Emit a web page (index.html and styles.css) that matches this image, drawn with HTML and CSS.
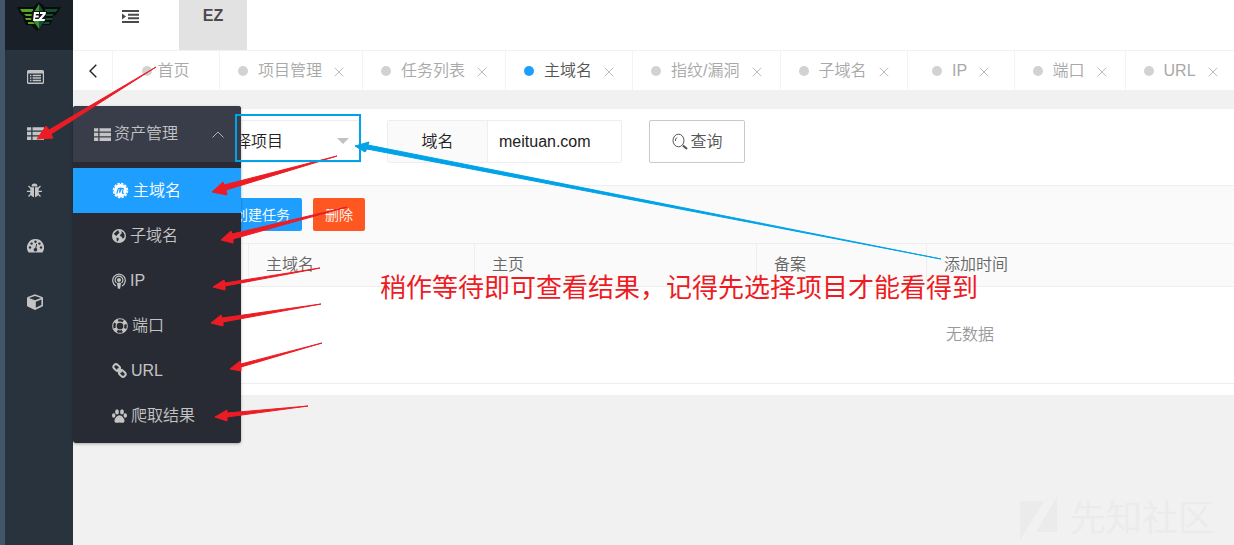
FILE: index.html
```html
<!DOCTYPE html>
<html lang="zh-CN">
<head>
<meta charset="utf-8">
<title>EZ</title>
<link rel="stylesheet" href="styles.css">
</head>
<body>
<svg class="defs" aria-hidden="true">
  <symbol id="list" viewBox="0 0 16 14"><path d="M0 1h4v3.200H0zM5.200 1H16v3.200H5.200zM0 5.400h4v3.200H0zM5.200 5.400H16v3.200H5.200zM0 9.800h4V13H0zM5.200 9.800H16V13H5.200z"/></symbol>
  <symbol id="close" viewBox="0 0 10 10"><path d="M.7.7l8.600 8.600M9.300.7L.7 9.300" fill="none" stroke="currentColor"/></symbol>
</svg>
<div class="app">
  <aside class="sidebar">
    <a class="logo" href="#" aria-label="EZ">
      <svg width="44" height="30" viewBox="0 0 44 30">
        <path d="M0 5h16l6-5 6 5h16l-5 8-3 1-1 5-2 4h-7l-6 6-6-6H9l-2-4-1-5-3-2z" fill="#080c0a"/>
        <path d="M3 7h13v3H5zM7 12h8v2H9zM8 16h7l1 2H9zM11 20h5l2 2h-7z" fill="#58a526"/>
        <path d="M41 7H28v3h11zM37 12h-8v2h6zM36 16h-7l-1 2h7zM33 20h-5l-2 2h6z" fill="#164d35"/>
        <path d="M22 2l-5 8v10l5 7z" fill="#438f2b"/><path d="M22 2l5 8v10l-5 7z" fill="#145038"/>
        <path d="M15 9h15l-2 10H14z" fill="#101a17"/>
        <path d="M17 10h5v2h-3l-.3 1.500h3v2h-3.300L18 17h4v2h-6zM23 10h6l-.4 2.500-4 4.500h3.400l-.4 2h-6l.4-2.500 4-4.500h-3z" fill="#fff"/>
      </svg>
    </a>
    <nav>
      <a class="side" href="#" aria-label="列表"><svg width="17" height="14" viewBox="0 0 17 14"><path fill-rule="evenodd" d="M1.500 0h14Q17 0 17 1.500v11Q17 14 15.500 14h-14Q0 14 0 12.500v-11Q0 0 1.500 0zM1.200 3.500v9h14.600v-9zM3 4.800h1.400v1.400H3zm2.600 0H14v1.400H5.600zM3 7.300h1.400v1.400H3zm2.600 0H14v1.400H5.600zM3 9.800h1.400v1.400H3zm2.600 0H14v1.400H5.600z"/></svg></a>
      <div class="group">
        <a class="side" href="#" aria-label="资产"><svg width="17" height="15"><use href="#list"/></svg></a>
        <div class="flyout">
          <a class="flyhead" href="#"><svg width="17" height="15"><use href="#list"/></svg><span>资产管理</span><svg class="chev" width="12" height="7" viewBox="0 0 12 7"><path d="M.5 6.500L6 1l5.500 5.500" fill="none" stroke="currentColor"/></svg></a>
          <div class="items">
            <a class="on" href="#"><svg width="17" height="17" viewBox="0 0 17 17"><circle cx="8.500" cy="8.500" r="6.500"/><circle cx="8.500" cy="8.500" r="7" fill="none" stroke="currentColor" stroke-width="1.500" stroke-dasharray="2.500 1.200"/><path d="M4.800 11.500l1.600-5 1.900-.3-.8 4.500 2-4.300 1.700.1-.8 4.500q.5.700 1.600 0" fill="none" stroke="#1e9fff" stroke-width="1.200"/></svg>主域名</a>
            <a href="#"><svg width="14" height="14" viewBox="0 0 14 14"><path fill-rule="evenodd" d="M7 0a7 7 0 100 14A7 7 0 007 0zM5 1.800L7 1.500 6.500 3l1.200.8L5.500 5.500 4.500 7 3 6 1.800 4.800zM9 2l2.500 1.500 1.200 3-.7 2.500-1.500.5-.8-1.700L8 7l.7-2L10 4.300zM4.500 8.500l2.500 1-1 2.500-1.200.6z"/></svg>子域名</a>
            <a href="#"><svg width="14" height="16" viewBox="0 0 14 16"><g fill="none" stroke="currentColor" stroke-width="1.200"><path d="M4 13A6.300 6.300 0 1110 13M4.500 10A3.900 3.900 0 119.500 10"/></g><circle cx="7" cy="7" r="2"/><path d="M5 10q2-1 4 0l-.8 5.500q-1.200.7-2.400 0z"/></svg>IP</a>
            <a href="#"><svg width="16" height="16" viewBox="0 0 16 16"><circle cx="8" cy="8" r="5.600" fill="none" stroke="currentColor" stroke-width="4.500"/><circle cx="8" cy="8" r="5.600" fill="none" stroke="#282b33" stroke-width="2.400" stroke-dasharray="5.200 3.600" stroke-dashoffset="2.600"/></svg>端口</a>
            <a href="#"><svg width="15" height="15" viewBox="0 0 15 15"><g fill="none" stroke="currentColor" stroke-width="2"><rect x="1.200" y="2" width="7" height="5" rx="2.300" transform="rotate(45 4.700 4.500)"/><rect x="6.800" y="8" width="7" height="5" rx="2.300" transform="rotate(45 10.300 10.500)"/><path d="M5.500 5.500l4 4"/></g></svg>URL</a>
            <a href="#"><svg width="15" height="14" viewBox="0 0 15 14"><ellipse cx="5" cy="2.900" rx="1.900" ry="2.700"/><ellipse cx="10" cy="2.900" rx="1.900" ry="2.700"/><ellipse cx="1.700" cy="6.500" rx="1.700" ry="2.200"/><ellipse cx="13.300" cy="6.500" rx="1.700" ry="2.200"/><path d="M7.500 6.300c2 0 5 3 5 5.500 0 3.200-3.200 1.600-5 1.600s-5 1.600-5-1.600c0-2.500 3-5.500 5-5.500z"/></svg>爬取结果</a>
          </div>
        </div>
      </div>
      <a class="side" href="#" aria-label="漏洞"><svg width="15" height="15" viewBox="0 0 15 15"><path d="M4.500 3.500a3 3 0 016 0zM3.500 4.300H7v9.900Q3.200 13.500 3.200 9zM8 4.300h3.500L11.800 9q0 4.500-3.800 5.200z"/><path d="M1.500 3l2.500 2.500M13.500 3L11 5.500M0 8.300h4M15 8.300h-4M1.500 13.500L4.500 10.500M13.500 13.500l-3-3" fill="none" stroke="currentColor" stroke-width="1.300"/></svg></a>
      <a class="side" href="#" aria-label="仪表盘"><svg width="17" height="14" viewBox="0 0 17 14"><path fill-rule="evenodd" d="M8.500 0A8.500 8.500 0 001.400 13.200Q1.600 13.500 2 13.500h13q.4 0 .6-.3A8.500 8.500 0 008.500 0z"/><g fill="#28333e"><circle cx="3" cy="8.500" r="1.200"/><circle cx="4.600" cy="4.600" r="1.200"/><circle cx="8.500" cy="2.800" r="1.200"/><circle cx="12.400" cy="4.600" r="1.200"/><circle cx="14" cy="8.500" r="1.200"/><path d="M9.200 4.900l.9.200-.8 4a1.800 1.800 0 11-1-.2z"/></g></svg></a>
      <a class="side" href="#" aria-label="组件"><svg width="16" height="16" viewBox="0 0 16 16"><path fill-rule="evenodd" d="M8 .3l7.300 2.600q.7.300.7 1v7.600q0 .7-.6 1L8.600 15.800q-.6.300-1.200 0L.6 12.500q-.6-.3-.6-1V3.900q0-.7.7-1zM8 1.900L2 4l6 2.300L14 4zM8.800 7.800v5.900l5.600-2.700V5.600z"/></svg></a>
    </nav>
  </aside>
  <main class="main">
    <header class="header">
      <button class="fold" type="button" aria-label="折叠菜单"><svg width="17" height="13" viewBox="0 0 17 13"><path d="M0 0h17v2H0zM6 3.700h11v2H6zM6 7.300h11v2H6zM0 11h17v2H0zM0 3.500l4 3-4 3z"/></svg></button>
      <a class="brand" href="#">EZ</a>
    </header>
    <nav class="tabs">
      <button class="prev" type="button" aria-label="向左"><svg width="9" height="14" viewBox="0 0 9 14"><path d="M8.300.7L2 7l6.300 6.300" fill="none" stroke="#222" stroke-width="1.400"/></svg></button>
      <a class="tab home" href="#"><i></i>首页</a>
      <a class="tab" href="#"><i></i>项目管理<svg width="10" height="10"><use href="#close"/></svg></a>
      <a class="tab" href="#"><i></i>任务列表<svg width="10" height="10"><use href="#close"/></svg></a>
      <a class="tab current" href="#"><i></i>主域名<svg width="10" height="10"><use href="#close"/></svg></a>
      <a class="tab" href="#"><i></i>指纹/漏洞<svg width="10" height="10"><use href="#close"/></svg></a>
      <a class="tab" href="#"><i></i>子域名<svg width="10" height="10"><use href="#close"/></svg></a>
      <a class="tab" href="#"><i></i>IP<svg width="10" height="10"><use href="#close"/></svg></a>
      <a class="tab" href="#"><i></i>端口<svg width="10" height="10"><use href="#close"/></svg></a>
      <a class="tab" href="#"><i></i>URL<svg width="10" height="10"><use href="#close"/></svg></a>
    </nav>
    <section class="card">
      <form class="search">
        <div class="pick"><select aria-label="项目"><option>请选择项目</option></select></div>
        <div class="field"><label for="domain">域名</label><input id="domain" type="text" value="meituan.com"></div>
        <button class="query" type="button"><svg width="17" height="17" viewBox="0 0 17 17"><g fill="none" stroke="currentColor"><ellipse cx="7.500" cy="7.500" rx="5.500" ry="6.300"/><path d="M4.500 8a3.500 3.500 0 011.500-3.500"/><path d="M12 12.500l4 3.500" stroke-width="2.200"/></g></svg>查询</button>
      </form>
      <div class="toolbar">
        <button class="btn" type="button">创建任务</button>
        <button class="btn danger" type="button">删除</button>
      </div>
      <div class="scroll">
        <table>
          <colgroup><col class="c1"><col class="c2"><col class="c3"><col class="c4"><col></colgroup>
          <thead><tr><th></th><th>主域名</th><th>主页</th><th>备案</th><th>添加时间</th></tr></thead>
          <tbody><tr><td colspan="5">无数据</td></tr></tbody>
        </table>
      </div>
    </section>
  </main>
</div>
<div class="watermark"><svg width="38" height="44" viewBox="0 0 38 44"><path d="M0 4h24L0 43zM37 0v35H16z"/></svg>先知社区</div>
<svg class="marks" width="1234" height="545" viewBox="0 0 1234 545" aria-hidden="true">
  <g fill="#ed1c24" stroke="#ed1c24" stroke-linejoin="bevel">
    <path d="M156 67L49 130 46 126 37 139 53 138 51 134z"/>
    <path d="M337 156L224 185 223 182 212 192 227 195 226 190z"/>
    <path d="M347 207L232 234 231 231 221 240 233 243 233 239z"/>
    <path d="M320 268L225 283 224 280 213 287 225 290 225 286z"/>
    <path d="M321 304L222 318 221 315 211 323 223 326 223 322z"/>
    <path d="M322 343L241 364 240 361 230 369 241 371 241 367z"/>
    <path d="M308 406L227 413 227 410 215 417 227 421 227 417z"/>
  </g>
  <path d="M941 259L368 145 369 142 355 146 365 152 367 149z" fill="#00a2e8" stroke="#00a2e8" stroke-linejoin="bevel"/>
  <path d="M236 115h124v46H236z" fill="none" stroke="#00a2e8" stroke-width="2"/>
</svg>
<p class="note">稍作等待即可查看结果，记得先选择项目才能看得到</p>
</body>
</html>
```
FILE: styles.css
```css
* { box-sizing: border-box; }
body {
  margin: 0;
  background: #f1f1f1;
  font: 16px/24px "Liberation Sans", "Noto Sans CJK SC", sans-serif;
  font-weight: 350;
  color: #666;
  overflow: hidden;
}
a { color: inherit; text-decoration: none; }
button, input, select { font: inherit; margin: 0; }
svg { fill: currentColor; flex: none; }
.defs { position: absolute; width: 0; height: 0; }
.app { display: flex; min-height: 100vh; }

.sidebar {
  flex: none;
  width: 73px;
  border-left: 5px solid #435569;
  background: #28333e;
  color: #c4c4c4;
}
.logo {
  display: flex;
  justify-content: center;
  height: 50px;
  padding-top: 2px;
  background: #1a2027;
}
.side { display: flex; align-items: center; height: 56px; padding: 0 0 2px 22px; }
.group { position: relative; }
.group ~ .side { padding-bottom: 0; }
.flyout {
  position: absolute;
  left: 100%;
  top: 0;
  z-index: 2;
  width: 168px;
  border-radius: 3px;
  background: #282b33;
  box-shadow: 0 1px 3px rgba(0, 0, 0, .3);
  overflow: hidden;
}
.flyhead {
  display: flex;
  align-items: center;
  gap: 3px;
  height: 56px;
  padding: 0 17px 0 21px;
  background: #393d49;
}
.chev { margin-left: auto; color: #9fb4c8; }
.items { padding: 6px 0 5px; }
.items a {
  display: flex;
  align-items: center;
  gap: 4px;
  height: 45px;
  padding-left: 39px;
}
.items .on { background: #1e9fff; color: #fff; }

.main { flex: 1; min-width: 0; }
.header { display: flex; height: 50px; background: #fff; color: #4d484c; }
.fold {
  display: flex;
  justify-content: center;
  width: 106px;
  padding: 10px 0 0 8px;
  border: 0;
  background: none;
  color: inherit;
}
.brand {
  width: 68px;
  background: #e2e2e2;
  font-weight: 700;
  line-height: 31px;
  text-align: center;
}
.tabs {
  display: flex;
  height: 41px;
  border: solid #f2f2f2;
  border-width: 1px 0;
  background: #fff;
  overflow: hidden;
}
.prev, .tab {
  display: flex;
  flex: none;
  align-items: center;
  justify-content: center;
  border: 0;
  border-right: 1px solid #f3f3f3;
}
.prev { width: 40px; padding: 0; background: none; }
.tab { min-width: 107px; padding: 0 18px; gap: 10px; color: #a8a8a8; }
.tab.home { gap: 5px; }
.tab.current { color: #555; }
.tab i { width: 10px; height: 10px; border-radius: 50%; background: #d2d2d2; }
.tab.current i { background: #1e9fff; }
.tab svg { margin: 2px 0 0 2px; color: #bbb; }

.card { margin: 18px 0 0 15px; padding-bottom: 11px; background: #fff; }
.search {
  display: flex;
  height: 77px;
  padding: 11px 0 0 102px;
  border-bottom: 1px solid #eee;
}
.pick { position: relative; width: 171px; height: 43px; }
.pick::after {
  content: "";
  position: absolute;
  top: 18px;
  right: 12px;
  border: 6px solid transparent;
  border-top-color: #c2c2c2;
}
.pick select {
  appearance: none;
  width: 100%;
  height: 100%;
  padding: 0 12px;
  border: 1px solid #eee;
  background: #fff;
  color: #222;
}
.field {
  display: flex;
  width: 235px;
  height: 43px;
  margin: 0 27px 0 26px;
  border: 1px solid #eee;
  border-radius: 2px;
  color: #222;
}
.field label {
  width: 100px;
  border-right: 1px solid #eee;
  background: #fafafa;
  line-height: 41px;
  text-align: center;
}
.field input {
  flex: 1;
  min-width: 0;
  padding: 0 11px;
  border: 0;
  background: none;
  color: #222;
}
.query {
  display: flex;
  align-items: center;
  justify-content: center;
  gap: 2px;
  width: 96px;
  height: 43px;
  padding: 0;
  border: 1px solid #c9c9c9;
  border-radius: 2px;
  background: #fff;
  color: #555;
}
.toolbar {
  display: flex;
  gap: 11px;
  height: 57px;
  padding: 12px 0 0 134px;
  background: #fafafa;
}
.btn {
  height: 33px;
  padding: 0 12px;
  border: 0;
  border-radius: 2px;
  background: #1e9fff;
  color: #fff;
  font-size: 14px;
}
.danger { background: #ff5722; }
.scroll { overflow: hidden; }
table { width: 1764px; table-layout: fixed; border-collapse: collapse; }
.c1 { width: 160px; }
.c2 { width: 226px; }
.c3 { width: 282px; }
.c4 { width: 170px; }
th {
  height: 43px;
  padding: 0 17px;
  border: 1px solid #eee;
  background: #fafafa;
  font-weight: inherit;
  text-align: left;
}
td {
  height: 97px;
  padding: 0;
  border-bottom: 1px solid #eee;
  color: #999;
  text-align: center;
}

.watermark {
  position: absolute;
  right: 20px;
  bottom: 4px;
  display: flex;
  align-items: center;
  gap: 12px;
  color: #ebebeb;
  font-size: 36px;
  line-height: 44px;
}
.marks { position: absolute; left: 0; top: 0; z-index: 3; pointer-events: none; }
.note {
  position: absolute;
  left: 380px;
  top: 268px;
  z-index: 4;
  margin: 0;
  color: #ed1c24;
  font-size: 26px;
  font-weight: 400;
  line-height: 40px;
  white-space: nowrap;
}
```
